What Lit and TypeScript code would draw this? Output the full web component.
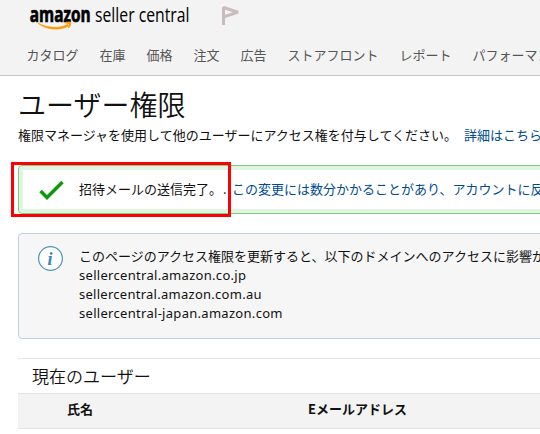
import { LitElement, html, css } from "lit";
import { customElement } from "lit/decorators.js";

@customElement("app-root")
export class AppRoot extends LitElement {
  static styles = css`
    :host {
      display: block;
      position: relative;
      width: 540px;
      height: 434px;
      overflow: hidden;
      box-sizing: border-box;
      background: #fff;
      color: #111;
      font: 400 13px/19px "Noto Sans CJK JP", sans-serif;
      white-space: nowrap;
    }
    * { box-sizing: border-box; }
    header {
      height: 76px;
      background: #f3f3f3;
      border-bottom: 1px solid #c8c8c8;
    }
    .brand { display: block; width: 540px; height: 40px; }
    .bold { font: 700 21px "Open Sans", sans-serif; }
    .thin { font: 400 20px "Open Sans", sans-serif; }
    nav {
      display: flex;
      gap: 21px;
      padding: 5px 0 0 26.5px;
      color: #555;
    }
    main { padding: 12px 0 0 18px; }
    h1 { margin: 0; font-size: 28px; line-height: 32px; font-weight: 350; }
    p { margin: 5px 0 0; }
    .link { color: #004b91; }
    .intro .link { margin-left: 4px; }
    .alert {
      display: flex;
      width: 560px;
      height: 49px;
      margin-top: 21px;
      border: 1px solid #7fcb85;
      border-radius: 4px;
      background: #fff;
      box-shadow: inset 0 0 0 4px #dff5df;
      padding: 13px 0 0 20px;
    }
    .check { width: 26px; height: 22px; margin: 1px 14px 0 0; }
    .dot { display: inline-block; width: 10px; padding-left: 1px; }
    .info {
      display: flex;
      width: 560px;
      height: 106px;
      margin-top: 19px;
      padding: 12px 0 0 19px;
      border: 1px solid #b9d3e0;
      border-radius: 4px;
      background: #f6f6f6;
    }
    .badge { width: 26px; height: 26px; margin-right: 15px; }
    .glyph { font: italic 700 18px "Liberation Serif", serif; }
    .line { display: block; }
    .domain { font-family: "Noto Sans", sans-serif; fill: #111; }
    .users { margin-top: 19px; border-top: 1px solid #e4e4e4; }
    h2 { margin: 0; padding-left: 14px; height: 34px; font-size: 17px; line-height: 33px; font-weight: 350; }
    .columns {
      display: grid;
      grid-template-columns: 241px 1fr;
      height: 36px;
      padding-left: 49px;
      line-height: 30px;
      font-weight: 700;
      background: #f3f3f3;
      border-top: 1px solid #e4e4e4;
      border-bottom: 1px solid #e4e4e4;
    }
    .marker {
      position: absolute;
      left: 11px;
      top: 162px;
      width: 220px;
      height: 55px;
      border: 3px solid #fb0007;
    }
  `;

  private menu = ["カタログ", "在庫", "価格", "注文", "広告", "ストアフロント", "レポート", "パフォーマンス"];
  private domains = [
    { name: "sellercentral.amazon.co.jp", width: 167 },
    { name: "sellercentral.amazon.com.au", width: 182.5 },
    { name: "sellercentral-japan.amazon.com", width: 203.5 },
  ];

  render() {
    return html`
      <header>
        <svg class="brand" viewBox="0 0 540 40">
          <text class="bold" x="29.8" y="22" textLength="60.8" lengthAdjust="spacingAndGlyphs" stroke="#000" stroke-width=".7">amazon</text>
          <text class="thin" x="95" y="22" textLength="94.5" lengthAdjust="spacingAndGlyphs">seller central</text>
          <path d="M38 23C46 28 59 29 67.500 24.500L68.500 26C60 30.800 46 30.200 38 23z" fill="#f90" stroke="#f90" stroke-width=".7" />
          <path d="M64.800 22.800C67.500 21.600 70 21.800 70.700 22.500C71.200 23.500 70.200 26.500 68.500 28C69 26 69.600 24.500 69 24C68.500 23.300 66.500 23.200 64.800 22.800z" fill="#f90" stroke="#f90" stroke-width=".8" />
          <path d="M223.500 25V7.500L238 12.200L223.500 17" fill="none" stroke="#c9bcbd" stroke-width="3" stroke-linejoin="bevel" />
        </svg>
        <nav>${this.menu.map((m) => html`<span>${m}</span>`)}</nav>
      </header>
      <main>
        <h1>ユーザー権限</h1>
        <p class="intro">権限マネージャを使用して他のユーザーにアクセス権を付与してください。 <span class="link">詳細はこちら</span></p>
        <section class="alert">
          <svg class="check" viewBox="0 0 26 22"><path d="M1.500 11L8 17.500L23.500 2" fill="none" stroke="#0b9a0b" stroke-width="3.500" /></svg>
          <span>招待メールの送信完了。<span class="dot">.</span><span class="link">この変更には数分かかることがあり、アカウントに反映</span></span>
        </section>
        <section class="info">
          <svg class="badge" viewBox="0 0 26 26">
            <circle cx="12.500" cy="12.500" r="11.900" fill="#fff" stroke="#4b94b8" stroke-width="1.200" />
            <text class="glyph" x="9.500" y="18.500" fill="#3d87b5">i</text>
          </svg>
          <div>
            <div>このページのアクセス権限を更新すると、以下のドメインへのアクセスに影響が</div>
            ${this.domains.map(
              (d) => html`<svg class="line" width="220" height="19"><text class="domain" x="0" y="15" textLength=${d.width}>${d.name}</text></svg>`
            )}
          </div>
        </section>
        <section class="users">
          <h2>現在のユーザー</h2>
          <div class="columns"><span>氏名</span><span>Eメールアドレス</span></div>
        </section>
      </main>
      <div class="marker"></div>
    `;
  }
}
